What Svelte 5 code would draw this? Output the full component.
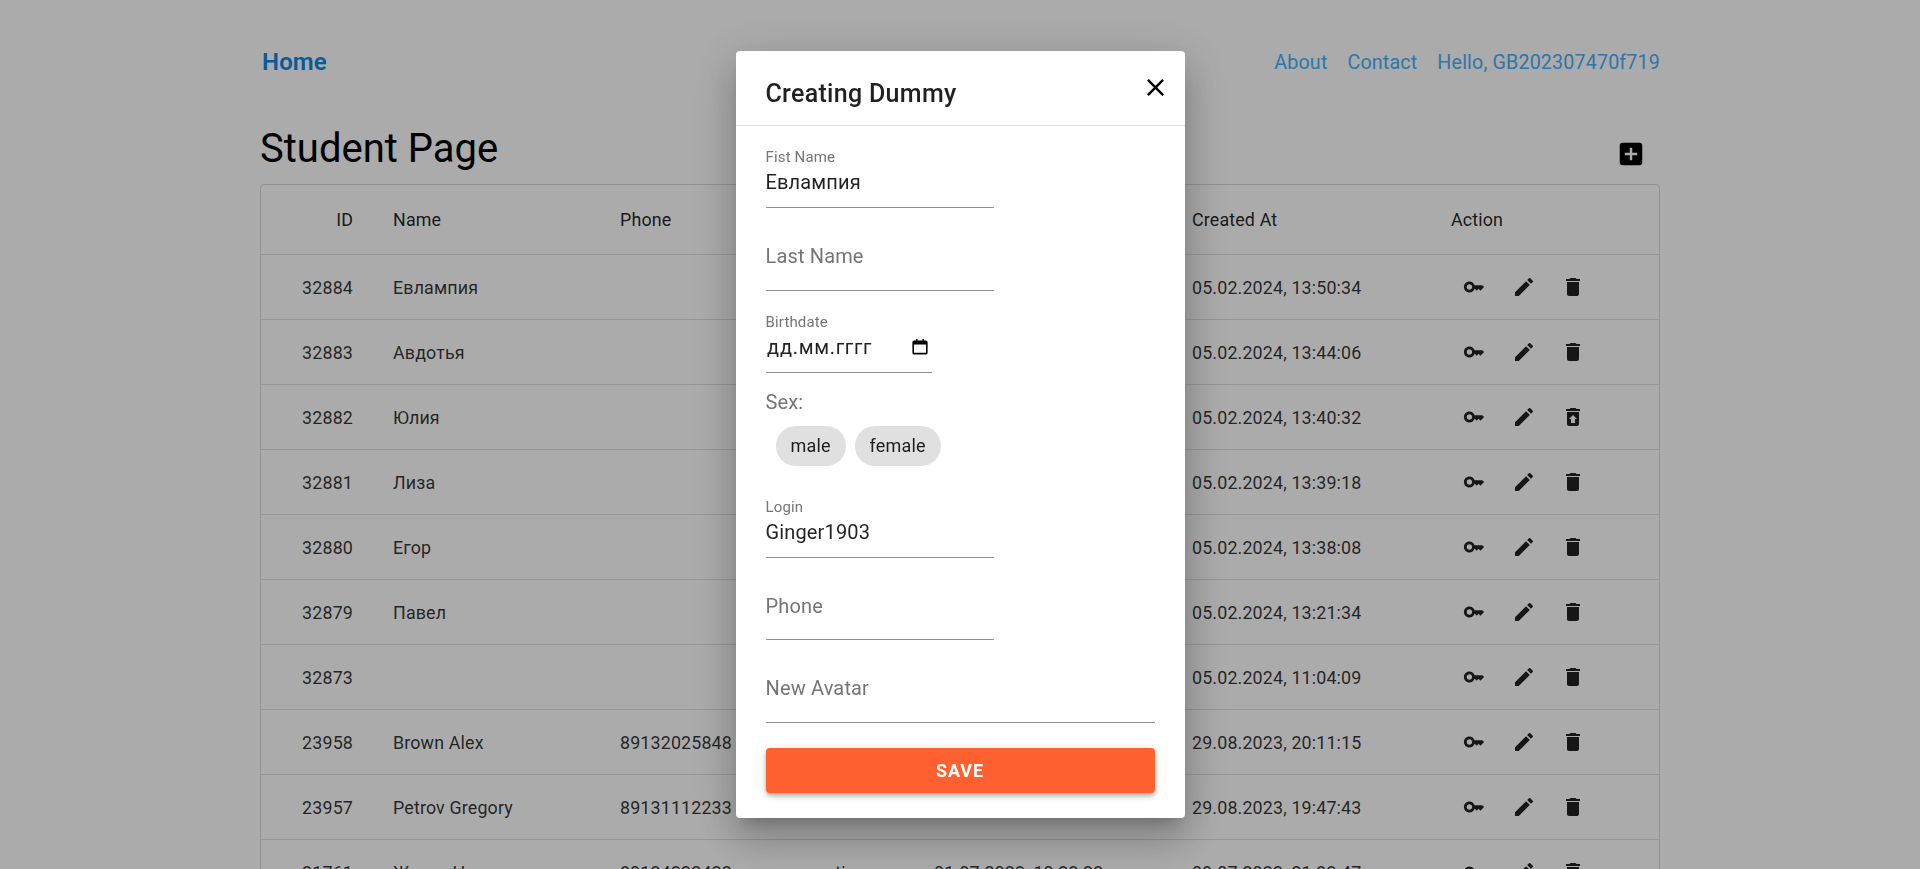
<script>
  const rows = [
    { id: 32884, name: 'Евлампия', phone: '', status: '', birth: '', created: '05.02.2024, 13:50:34' },
    { id: 32883, name: 'Авдотья', phone: '', status: '', birth: '', created: '05.02.2024, 13:44:06' },
    { id: 32882, name: 'Юлия', phone: '', status: '', birth: '', created: '05.02.2024, 13:40:32', restore: true },
    { id: 32881, name: 'Лиза', phone: '', status: '', birth: '', created: '05.02.2024, 13:39:18' },
    { id: 32880, name: 'Егор', phone: '', status: '', birth: '', created: '05.02.2024, 13:38:08' },
    { id: 32879, name: 'Павел', phone: '', status: '', birth: '', created: '05.02.2024, 13:21:34' },
    { id: 32873, name: '', phone: '', status: '', birth: '', created: '05.02.2024, 11:04:09' },
    { id: 23958, name: 'Brown Alex', phone: '89132025848', status: '', birth: '', created: '29.08.2023, 20:11:15' },
    { id: 23957, name: 'Petrov Gregory', phone: '89131112233', status: '', birth: '', created: '29.08.2023, 19:47:43' },
    { id: 21761, name: 'Жуков Н', phone: '89134332422', status: 'active', birth: '01.07.2023, 10:33:33', created: '09.07.2023, 21:33:47' }
  ];

  const keyPath = 'M21 10h-8.35C11.83 7.67 9.61 6 7 6c-3.31 0-6 2.69-6 6s2.69 6 6 6c2.61 0 4.83-1.67 5.65-4H13l2 2 2-2 2 2 4-4.04L21 10zM7 15c-1.65 0-3-1.35-3-3s1.35-3 3-3 3 1.35 3 3-1.35 3-3 3z';
  const editPath = 'M3 17.25V21h3.75L17.81 9.94l-3.75-3.75L3 17.25zM20.71 7.04c.39-.39.39-1.02 0-1.41l-2.34-2.34a.9959.9959 0 0 0-1.41 0l-1.83 1.83 3.75 3.75 1.83-1.83z';
  const deletePath = 'M6 19c0 1.1.9 2 2 2h8c1.1 0 2-.9 2-2V7H6v12zM19 4h-3.5l-1-1h-5l-1 1H5v2h14V4z';
  const restorePath = 'M19 4h-3.5l-1-1h-5l-1 1H5v2h14zM6 7v12c0 1.1.9 2 2 2h8c1.1 0 2-.9 2-2V7H6zm8 7v4h-4v-4H8l4-4 4 4h-2z';
</script>

<div class="page">
  <nav class="nav">
    <a class="home" href="#home">Home</a>
    <div class="links">
      <a href="#about">About</a>
      <a href="#contact">Contact</a>
      <a href="#hello">Hello, GB202307470f719</a>
    </div>
  </nav>

  <div class="title-row">
    <h1>Student Page</h1>
    <svg class="add" viewBox="0 0 24 24"><path d="M19 3H5c-1.11 0-2 .9-2 2v14c0 1.1.89 2 2 2h14c1.1 0 2-.9 2-2V5c0-1.1-.9-2-2-2zm-2 10h-4v4h-2v-4H7v-2h4V7h2v4h4v2z"/></svg>
  </div>

  <div class="table-wrap">
    <table>
      <colgroup>
        <col style="width:116px" />
        <col style="width:227px" />
        <col style="width:196px" />
        <col style="width:118px" />
        <col style="width:258px" />
        <col style="width:259px" />
        <col />
      </colgroup>
      <thead>
        <tr>
          <th class="num">ID</th>
          <th>Name</th>
          <th>Phone</th>
          <th>Status</th>
          <th>Birthdate</th>
          <th>Created At</th>
          <th>Action</th>
        </tr>
      </thead>
      <tbody>
        {#each rows as r}
          <tr>
            <td class="num">{r.id}</td>
            <td>{r.name}</td>
            <td>{r.phone}</td>
            <td>{r.status}</td>
            <td>{r.birth}</td>
            <td>{r.created}</td>
            <td>
              <div class="actions">
                <span class="icon-btn key"><svg viewBox="0 0 24 24"><path d={keyPath}/></svg></span>
                <span class="icon-btn"><svg viewBox="0 0 24 24"><path d={editPath}/></svg></span>
                <span class="icon-btn"><svg viewBox="0 0 24 24"><path d={r.restore ? restorePath : deletePath}/></svg></span>
              </div>
            </td>
          </tr>
        {/each}
      </tbody>
    </table>
  </div>
</div>

<div class="backdrop">
  <div class="modal">
    <header class="modal-head">
      <h2>Creating Dummy</h2>
      <svg class="close" viewBox="0 0 24 24"><path d="M19 6.41 17.59 5 12 10.59 6.41 5 5 6.41 10.59 12 5 17.59 6.41 19 12 13.41 17.59 19 19 17.59 13.41 12z"/></svg>
    </header>
    <div class="modal-body">
      <div class="field half">
        <span class="label">Fist Name</span>
        <span class="value">Евлампия</span>
      </div>
      <div class="field half empty">
        <span class="placeholder">Last Name</span>
      </div>
      <div class="field date">
        <span class="label">Birthdate</span>
        <span class="value date-value">дд.мм.гггг
          <svg class="cal" viewBox="0 0 16 16"><path d="M4 0h1.6v1.6h4.8V0H12v1.6h2A1.6 1.6 0 0 1 15.6 3.2v10.6a1.6 1.6 0 0 1-1.6 1.6H2A1.6 1.6 0 0 1 .4 13.8V3.2A1.6 1.6 0 0 1 2 1.6h2zM2 5.4v8.4h12V5.4z"/></svg>
        </span>
      </div>
      <div class="sex-label">Sex:</div>
      <div class="chips">
        <span class="chip">male</span>
        <span class="chip">female</span>
      </div>
      <div class="field half">
        <span class="label">Login</span>
        <span class="value">Ginger1903</span>
      </div>
      <div class="field half empty">
        <span class="placeholder">Phone</span>
      </div>
      <div class="field empty">
        <span class="placeholder">New Avatar</span>
      </div>
      <button class="save">SAVE</button>
    </div>
  </div>
</div>

<style>
  :global(body) { margin: 0; height: 100vh; overflow: hidden; background: #fff; font-family: Roboto, sans-serif; letter-spacing: .00938em; }

  .page { width: 1400px; margin: 0 auto; }

  .nav { display: flex; justify-content: space-between; align-items: center; height: 44px; padding: 40px 0 0 2px; }
  .nav a { text-decoration: none; }
  .home { font-size: 24px; font-weight: 600; color: #0d88e8; }
  .links { display: flex; gap: 20px; font-size: 19.7px; }
  .links a { color: #46b0ff; }

  .title-row { display: flex; justify-content: space-between; align-items: center; height: 56px; margin-top: 36px; padding-right: 14px; }
  h1 { margin: 0; font-size: 40px; font-weight: 400; color: #000; letter-spacing: 0; }
  .add { width: 30px; height: 30px; fill: #000; margin-top: 12px; }

  .table-wrap { margin-top: 8px; border: 1px solid rgba(0, 0, 0, .15); border-radius: 4px; }
  table { width: 100%; table-layout: fixed; border-collapse: separate; border-spacing: 0; color: rgba(0, 0, 0, .8); font-size: 17.85px; }
  th, td { box-sizing: border-box; padding: 0 16px; text-align: left; border-bottom: 1px solid rgba(0, 0, 0, .12); white-space: nowrap; }
  th { height: 70px; font-weight: 400; color: rgba(0, 0, 0, .87); }
  td { height: 65px; padding-top: 1px; font-weight: 400; }
  th.num, td.num { text-align: right; padding-right: 24px; }
  .actions { display: flex; gap: 9.5px; padding-left: 3px; margin-top: -1px; }
  .icon-btn { display: flex; padding: 8px; }
  .icon-btn.key { padding: 9px; }
  .icon-btn svg { width: 24px; height: 24px; fill: rgba(0, 0, 0, .87); }
  .icon-btn.key svg { width: 22px; height: 22px; }

  .backdrop { position: fixed; inset: 0; display: flex; align-items: center; justify-content: center; background: rgba(0, 0, 0, .33); }
  .modal { width: 449px; height: 767px; background: #fff; border-radius: 4px; box-shadow: 0 11px 15px -7px rgba(0, 0, 0, .2), 0 24px 38px 3px rgba(0, 0, 0, .14), 0 9px 46px 8px rgba(0, 0, 0, .12); }
  .modal-head { display: flex; justify-content: space-between; height: 74px; padding: 0 15px 0 30px; border-bottom: 1px solid #e0e0e0; }
  h2 { margin: 0; font-size: 25px; font-weight: 500; line-height: 86px; color: rgba(0, 0, 0, .87); letter-spacing: .012em; }
  .close { width: 29px; height: 29px; margin-top: 22px; fill: #000; }

  .modal-body { padding: 15.5px 30px 25px; display: flex; flex-direction: column; }
  .field { box-sizing: border-box; height: 66.5px; margin-bottom: 16px; display: flex; flex-direction: column; justify-content: flex-end; padding-bottom: 13px; border-bottom: 1px solid #8f8f8f; }
  .field.half { width: 228px; }
  .field.date { width: 166px; }
  .field.empty { padding-bottom: 21.5px; }
  .label { font-size: 15px; line-height: 16px; margin-bottom: 5px; color: #757575; }
  .value { font-size: 20px; line-height: 24px; color: rgba(0, 0, 0, .87); }
  .placeholder { font-size: 20px; line-height: 24px; color: #757575; }
  .date-value { display: flex; justify-content: space-between; align-items: center; padding: 0 4px 0 1.5px; letter-spacing: .035em; }
  .cal { width: 16px; height: 16px; fill: #000; }

  .sex-label { font-size: 20px; line-height: 26px; color: #757575; }
  .chips { display: flex; gap: 9px; margin: 11px 0 25px 10px; }
  .chip { height: 40px; padding: 0 15px; border-radius: 20px; background: #e0e0e0; font-size: 18px; line-height: 40px; color: rgba(0, 0, 0, .87); }

  .save { height: 45px; margin-top: 9px; border: 0; border-radius: 4px; background: #ff6030; color: #fff; font-family: inherit; font-size: 18px; font-weight: 700; letter-spacing: .05em; box-shadow: 0 2px 4px -1px rgba(0, 0, 0, .2), 0 4px 5px 0 rgba(0, 0, 0, .14), 0 1px 10px 0 rgba(0, 0, 0, .12); }
</style>
